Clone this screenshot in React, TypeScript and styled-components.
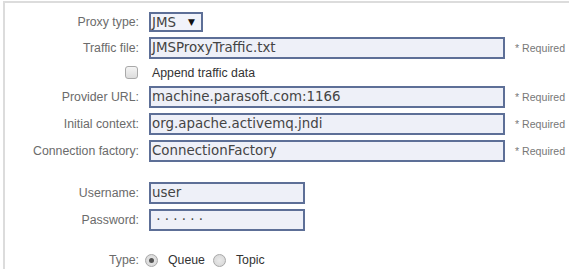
import React from "react";
import styled, { createGlobalStyle } from "styled-components";

const Global = createGlobalStyle`
  html, body { margin: 0; padding: 0; background: #fff; }
  body { font-family: "Liberation Sans", Arial, sans-serif; }
`;

const Panel = styled.div`
  margin: 1px 0 0 3px;
  border-top: 2px solid #dcdcdc;
  border-left: 2px solid #dcdcdc;
  height: 268px;
  box-sizing: border-box;
  padding-top: 9px;
  display: flex;
  flex-direction: column;
`;

const Row = styled.div<{ $gap?: number }>`
  display: grid;
  grid-template-columns: 134px 356px auto;
  column-gap: 10px;
  align-items: center;
  margin-top: ${(p) => p.$gap ?? 5}px;
`;

const Label = styled.label`
  text-align: right;
  font-size: 12.3px;
  color: #6b6b6b;
  white-space: nowrap;
`;

const Input = styled.div<{ $w?: number }>`
  box-sizing: border-box;
  height: 22px;
  width: ${(p) => p.$w ?? 356}px;
  background: #eef0f8;
  border: 2px solid #5d6f97;
  padding: 0 1px;
  font-family: "DejaVu Sans", Tahoma, sans-serif;
  font-size: 13.4px;
  color: #444;
  line-height: 18px;
  white-space: nowrap;
  overflow: hidden;
`;

const Select = styled.div`
  box-sizing: border-box;
  height: 20px;
  width: 54px;
  background: #f1f3fa;
  border: 2px solid #5d6f97;
  padding: 0 1px;
  display: flex;
  align-items: center;
  justify-content: space-between;
  font-family: "DejaVu Sans", Tahoma, sans-serif;
  font-size: 13.4px;
  color: #444;
`;

const Arrow = styled.span`
  font-size: 9px;
  color: #111;
  margin-right: 5px;
`;

const Required = styled.span`
  font-size: 10.6px;
  color: #777;
`;

const CheckRow = styled.div`
  display: flex;
  align-items: center;
  height: 17px;
  margin-top: 5px;
  padding-left: 120px;
  gap: 14px;
  font-size: 12.3px;
  color: #333;
`;

const Box = styled.span`
  width: 11px;
  height: 11px;
  border: 1px solid #a9a9a9;
  border-radius: 3px;
  background: linear-gradient(#f4f4f4, #dcdcdc);
`;

const Spacer = styled.div<{ $h: number }>`
  height: ${(p) => p.$h}px;
`;

const RadioGroup = styled.div`
  display: flex;
  align-items: center;
  font-size: 12.3px;
  color: #333;
`;

const Radio = styled.span<{ $on?: boolean }>`
  box-sizing: border-box;
  width: 13px;
  height: 13px;
  border-radius: 50%;
  border: 1px solid #a8a8a8;
  background: radial-gradient(circle, #eaeaea, #d4d4d4);
  margin-left: -4px;
  margin-right: 10px;
  display: flex;
  align-items: center;
  justify-content: center;
  &::after {
    content: "";
    display: ${(p) => (p.$on ? "block" : "none")};
    width: 5px;
    height: 5px;
    border-radius: 50%;
    background: #555;
  }
`;

const RadioLabel = styled.span`
  margin-right: 12px;
`;

export default function App() {
  return (
    <>
      <Global />
      <Panel>
        <Row $gap={0}>
          <Label>Proxy type:</Label>
          <Select>
            JMS<Arrow>▼</Arrow>
          </Select>
        </Row>
        <Row>
          <Label>Traffic file:</Label>
          <Input>JMSProxyTraffic.txt</Input>
          <Required>* Required</Required>
        </Row>
        <CheckRow>
          <Box />
          <span>Append traffic data</span>
        </CheckRow>
        <Row>
          <Label>Provider URL:</Label>
          <Input>machine.parasoft.com:1166</Input>
          <Required>* Required</Required>
        </Row>
        <Row>
          <Label>Initial context:</Label>
          <Input>org.apache.activemq.jndi</Input>
          <Required>* Required</Required>
        </Row>
        <Row>
          <Label>Connection factory:</Label>
          <Input>ConnectionFactory</Input>
          <Required>* Required</Required>
        </Row>
        <Spacer $h={15} />
        <Row>
          <Label>Username:</Label>
          <Input $w={156}>user</Input>
        </Row>
        <Row>
          <Label>Password:</Label>
          <Input $w={156}>&nbsp;·&nbsp;·&nbsp;·&nbsp;·&nbsp;·&nbsp;·</Input>
        </Row>
        <Row $gap={22}>
          <Label>Type:</Label>
          <RadioGroup>
            <Radio $on />
            <RadioLabel>Queue</RadioLabel>
            <Radio />
            <RadioLabel>Topic</RadioLabel>
          </RadioGroup>
        </Row>
      </Panel>
    </>
  );
}
